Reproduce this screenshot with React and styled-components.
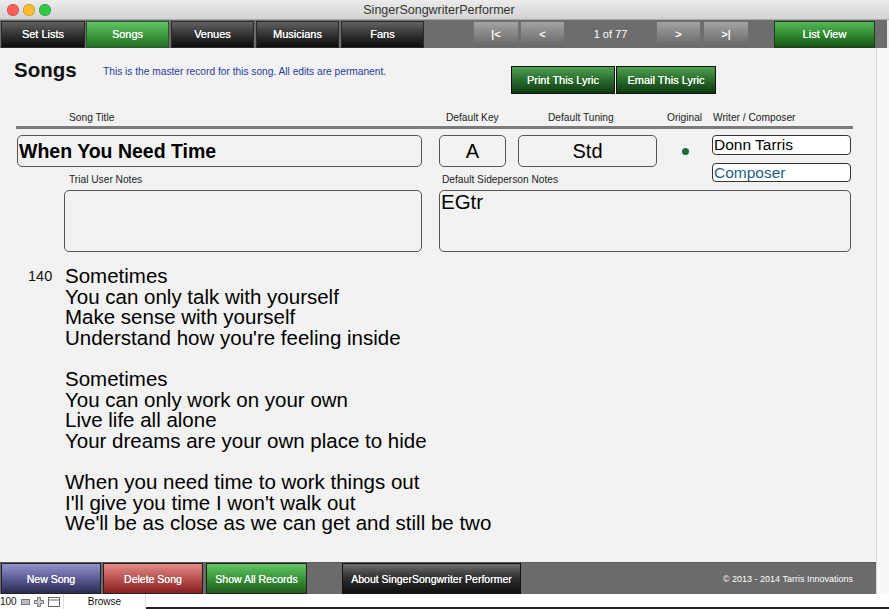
import React from 'react'
import styled, { createGlobalStyle, css } from 'styled-components'

const GlobalStyle = createGlobalStyle`
  html, body {
    margin: 0;
    padding: 0;
    background: #ffffff;
  }
  body {
    font-family: "Liberation Sans", Arial, sans-serif;
  }
`

const lyrics = [
  'Sometimes',
  'You can only talk with yourself',
  'Make sense with yourself',
  "Understand how you're feeling inside",
  '',
  'Sometimes',
  'You can only work on your own',
  'Live life all alone',
  'Your dreams are your own place to hide',
  '',
  'When you need time to work things out',
  "I'll give you time I won't walk out",
  "We'll be as close as we can get and still be two",
]

const gradients = {
  dark: css`
    background: linear-gradient(#616161, #333 50%, #0c0c0c);
    border: 1px solid #2a2a2a;
  `,
  green: css`
    background: linear-gradient(#63c263, #3e9c3e 50%, #236f23);
    border: 1px solid #2b5a2b;
  `,
  list: css`
    background: linear-gradient(#55b655, #2f862f 55%, #175417);
    border: 1px solid #1c3c1c;
  `,
  deep: css`
    background: linear-gradient(#4f9f4f, #27672a 55%, #0e3a10);
    border: 1px solid #111;
  `,
  pager: css`
    background: linear-gradient(#a3a3a3, #838383 50%, #666);
    border: 1px solid #6f6f6f;
  `,
  blue: css`
    background: linear-gradient(#9292cc, #5c5c96 50%, #2b2b52);
    border: 1px solid #222;
  `,
  red: css`
    background: linear-gradient(#e48a88, #b85250 50%, #862020);
    border: 1px solid #222;
  `,
  green2: css`
    background: linear-gradient(#62c662, #3a943a 50%, #1d5a1d);
    border: 1px solid #222;
  `,
  black: css`
    background: linear-gradient(#6c6c6c, #2e2e2e 50%, #0e0e0e);
    border: 1px solid #111;
  `,
}

const Window = styled.div`
  width: 889px;
  height: 609px;
  overflow: hidden;
  display: flex;
  flex-direction: column;
  background: #f2f2f2;
`

const TitleBar = styled.div`
  height: 20px;
  flex: none;
  display: flex;
  align-items: center;
  background: linear-gradient(#ececec, #d3d3d3);
  border-bottom: 1px solid #a9a9a9;
  box-sizing: border-box;
`

const Lights = styled.div`
  display: flex;
  gap: 4px;
  padding-left: 7px;
`

const Light = styled.span`
  width: 12px;
  height: 12px;
  border-radius: 50%;
  background: ${p => p.c};
  box-shadow: inset 0 0 0 0.5px rgba(0, 0, 0, 0.3);
`

const WindowTitle = styled.div`
  flex: 1;
  text-align: center;
  font-size: 12.5px;
  color: #333;
  margin-right: 62px;
  margin-top: 1px;
`

const NavBar = styled.div`
  height: 28px;
  flex: none;
  display: flex;
  align-items: center;
  background: #6d6d6d;
  padding-left: 1px;
  border-right: 2px solid #e9e9e9;
`

const Tabs = styled.div`
  display: flex;
  gap: 1px;
`

const Btn = styled.div`
  box-sizing: border-box;
  width: ${p => p.w}px;
  height: ${p => p.h || 27}px;
  margin-left: ${p => p.ml || 0}px;
  display: flex;
  align-items: center;
  justify-content: center;
  color: #fff;
  font-size: ${p => p.fs || 11}px;
  text-shadow: 0 0 0.4px #fff;
  white-space: nowrap;
  ${p => gradients[p.kind || 'dark']}
`

const Pager = styled.div`
  display: flex;
  gap: 1px;
  margin-left: 49px;
`

const PageCount = styled.div`
  width: 89px;
  height: 27px;
  display: flex;
  align-items: center;
  justify-content: center;
  color: #fff;
  font-size: 11px;
`

const Main = styled.div`
  flex: 1;
  display: flex;
  min-height: 0;
`

const Column = styled.div`
  width: 876px;
  display: flex;
  flex-direction: column;
`

const ScrollStrip = styled.div`
  flex: 1;
  background: #f8f8f8;
  border-left: 1px solid #dadada;
`

const Content = styled.div`
  flex: 1;
  background: #f2f2f2;
`

const Header = styled.div`
  height: 62px;
  display: grid;
  grid-template-columns: 89px 408px auto;
  align-items: start;
  padding-left: 14px;
`

const Heading = styled.h1`
  margin: 12px 0 0;
  font-size: 20.5px;
  line-height: 1;
  font-weight: bold;
  color: #111;
`

const Note = styled.div`
  margin-top: 19px;
  font-size: 10.2px;
  line-height: 1;
  color: #2a3a9e;
  white-space: nowrap;
`

const Actions = styled.div`
  display: flex;
  gap: 1px;
  margin-top: 18px;
`

const LabelRow = styled.div`
  height: 16px;
  display: flex;
  align-items: center;
`

const Label = styled.div`
  font-size: 10.2px;
  line-height: 12px;
  color: #222;
  white-space: nowrap;
  margin-left: ${p => p.x}px;
  width: ${p => p.w || 'auto'};
`

const Rule = styled.div`
  margin-left: 16px;
  width: 837px;
  height: 3px;
  background: #7b7b7b;
`

const Form = styled.div`
  display: flex;
  gap: 17px;
  padding-left: 17px;
  margin-top: 6px;
`

const LeftBlock = styled.div`
  width: 405px;
  display: flex;
  flex-direction: column;
`

const RightBlock = styled.div`
  width: 412px;
  display: grid;
  grid-template-columns: 67px 12px 139px 55px 139px;
  grid-template-rows: 32px 23px 62px;
`

const Field = styled.div`
  box-sizing: border-box;
  height: ${p => p.h || 32}px;
  grid-column: ${p => p.col || 'auto'};
  border: 1px solid #555;
  border-radius: 5px;
  background: #f2f2f2;
  color: #000;
  display: flex;
  align-items: center;
  justify-content: ${p => (p.center ? 'center' : 'flex-start')};
  font-size: ${p => p.fs || 20}px;
  font-weight: ${p => (p.bold ? 'bold' : 'normal')};
  padding-left: ${p => (p.center ? 0 : 1)}px;
  white-space: nowrap;
`

const SubLabel = styled.div`
  height: 23px;
  box-sizing: border-box;
  padding-top: 7px;
  font-size: 10.2px;
  line-height: 12px;
  color: #222;
  padding-left: ${p => p.x}px;
  grid-column: ${p => p.col || 'auto'};
`

const NotesBox = styled.div`
  box-sizing: border-box;
  height: 62px;
  border: 1px solid #555;
  border-radius: 5px;
  margin-left: ${p => p.ml || 0}px;
  font-size: 20.5px;
  line-height: 1;
  padding: 1px 0 0 1px;
  color: #000;
  grid-column: ${p => p.col || 'auto'};
`

const DotCell = styled.div`
  grid-column: 4;
  display: flex;
  align-items: center;
  justify-content: center;
  padding-left: 2px;
`

const Dot = styled.span`
  width: 7px;
  height: 7px;
  border-radius: 50%;
  background: #1d6b3c;
`

const WriterStack = styled.div`
  grid-column: 5;
  grid-row: 1 / span 2;
  display: flex;
  flex-direction: column;
  gap: 8px;
`

const WriterField = styled(Field)`
  font-size: 15.5px;
  color: ${p => p.color || '#000'};
  border-radius: 4px;
  background: #fff;
  border-color: #333;
`

const Lyrics = styled.div`
  display: flex;
  margin-top: 14px;
  padding-left: 28px;
`

const LineNo = styled.div`
  width: 37px;
  font-size: 14.5px;
  line-height: 20.6px;
  color: #111;
`

const LyricText = styled.div`
  font-size: 20.5px;
  line-height: 20.6px;
  color: #000;
  white-space: pre;
`

const BottomBar = styled.div`
  height: 32px;
  flex: none;
  box-sizing: border-box;
  display: flex;
  align-items: center;
  gap: 2px;
  padding-left: 1px;
  background: #6b6b6b;
  border-top: 1px solid #5a5a5a;
`

const Copyright = styled.div`
  margin-left: auto;
  padding-right: 23px;
  font-size: 9px;
  color: #fff;
`

const StatusBar = styled.div`
  height: 15px;
  flex: none;
  display: flex;
  align-items: center;
  background: #fff;
  font-size: 10px;
  color: #111;
`

const Zoom = styled.div`
  display: flex;
  align-items: center;
  gap: 4px;
  width: 63px;
  height: 100%;
  border-right: 1px solid #ddd;
`

const Mode = styled.div`
  width: 81px;
  height: 100%;
  display: flex;
  align-items: center;
  justify-content: center;
  border-right: 1px solid #ddd;
`

const StatusRest = styled.div`
  flex: 1;
  height: 100%;
  box-sizing: border-box;
  border-bottom: 2px solid #222;
`

export default function App() {
  return (
    <>
      <GlobalStyle />
      <Window>
        <TitleBar>
          <Lights>
            <Light c="#fc5f57" />
            <Light c="#fdbc2e" />
            <Light c="#33c748" />
          </Lights>
          <WindowTitle>SingerSongwriterPerformer</WindowTitle>
        </TitleBar>

        <NavBar>
          <Tabs>
            <Btn w={84}>Set Lists</Btn>
            <Btn w={83} kind="green">Songs</Btn>
            <Btn w={83} ml={1}>Venues</Btn>
            <Btn w={83} ml={1}>Musicians</Btn>
            <Btn w={83} ml={1}>Fans</Btn>
          </Tabs>
          <Pager>
            <Btn w={46} kind="pager">|&lt;</Btn>
            <Btn w={45} kind="pager">&lt;</Btn>
            <PageCount>1 of 77</PageCount>
            <Btn w={45} kind="pager">&gt;</Btn>
            <Btn w={46} kind="pager" ml={1}>&gt;|</Btn>
          </Pager>
          <Btn w={101} kind="list" ml={25}>List View</Btn>
        </NavBar>

        <Main>
          <Column>
            <Content>
              <Header>
                <Heading>Songs</Heading>
                <Note>This is the master record for this song. All edits are permanent.</Note>
                <Actions>
                  <Btn w={104} h={28} kind="deep">Print This Lyric</Btn>
                  <Btn w={100} h={28} kind="deep">Email This Lyric</Btn>
                </Actions>
              </Header>

              <LabelRow>
                <Label x={69} w="377px">Song Title</Label>
                <Label x={0} w="102px">Default Key</Label>
                <Label x={0} w="119px">Default Tuning</Label>
                <Label x={0} w="46px">Original</Label>
                <Label x={0}>Writer / Composer</Label>
              </LabelRow>
              <Rule />

              <Form>
                <LeftBlock>
                  <Field bold fs={19.5}>When You Need Time</Field>
                  <SubLabel x={52}>Trial User Notes</SubLabel>
                  <NotesBox ml={47} />
                </LeftBlock>

                <RightBlock>
                  <Field center>A</Field>
                  <Field center col={3}>Std</Field>
                  <DotCell>
                    <Dot />
                  </DotCell>
                  <WriterStack>
                    <WriterField h={20}>Donn Tarris</WriterField>
                    <WriterField h={19} color="#245f86">Composer</WriterField>
                  </WriterStack>
                  <SubLabel x={3} col="1 / span 4">Default Sideperson Notes</SubLabel>
                  <NotesBox col="1 / span 5">EGtr</NotesBox>
                </RightBlock>
              </Form>

              <Lyrics>
                <LineNo>140</LineNo>
                <LyricText>
                  {lyrics.map((l, i) => (
                    <div key={i}>{l || '\u00a0'}</div>
                  ))}
                </LyricText>
              </Lyrics>
            </Content>

            <BottomBar>
              <Btn w={100} h={31} fs={10.5} kind="blue">New Song</Btn>
              <Btn w={100} h={31} fs={10.5} kind="red">Delete Song</Btn>
              <Btn w={101} h={31} fs={10.5} kind="green2" ml={1}>Show All Records</Btn>
              <Btn w={179} h={31} fs={10.5} kind="black" ml={33}>About SingerSongwriter Performer</Btn>
              <Copyright>© 2013 - 2014 Tarris Innovations</Copyright>
            </BottomBar>
          </Column>
          <ScrollStrip />
        </Main>

        <StatusBar>
          <Zoom>
            <span>100</span>
            <svg width="9" height="6" viewBox="0 0 9 6">
              <rect x="0.5" y="0.5" width="8" height="5" fill="#bbb" stroke="#777" />
            </svg>
            <svg width="10" height="10" viewBox="0 0 10 10">
              <path d="M3.5 0.5h3v3h3v3h-3v3h-3v-3h-3v-3h3z" fill="#ccc" stroke="#777" />
            </svg>
            <svg width="12" height="10" viewBox="0 0 12 10">
              <rect x="0.5" y="0.5" width="11" height="9" fill="#fff" stroke="#666" />
              <line x1="0.5" y1="3" x2="11.5" y2="3" stroke="#666" />
            </svg>
          </Zoom>
          <Mode>Browse</Mode>
          <StatusRest />
        </StatusBar>
      </Window>
    </>
  )
}
